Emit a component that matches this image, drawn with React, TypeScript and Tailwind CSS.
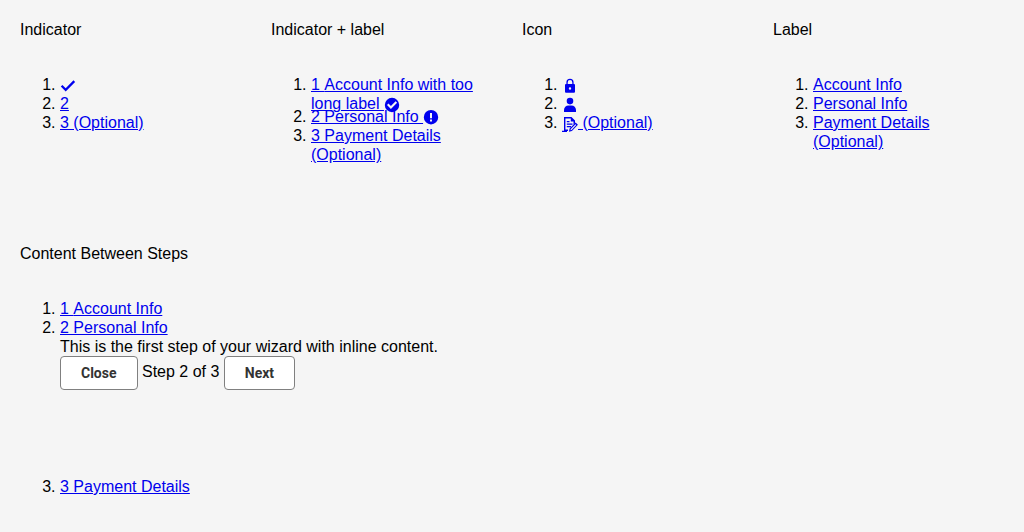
import type { ReactNode } from 'react';

const link = 'text-[#0000ee] underline';
const list = 'list-decimal pl-10 leading-[19px]';
const button =
  'h-[34px] rounded-[4px] border border-[#808080] bg-white px-5 align-middle font-[Roboto,sans-serif] text-sm font-bold text-[#333333]';

function Glyph({ d }: { d: string }) {
  return (
    <svg viewBox="0 0 16 16" aria-hidden="true" className="inline-block size-4 align-[-4px]">
      <path fill="currentColor" fillRule="evenodd" d={d} />
    </svg>
  );
}

const check = 'M5.7 13.4.8 8.5l1.600-1.600 3.300 3.300 7.800-7.900 1.600 1.600z';
const checkCircle = 'M8 .8a7.2 7.2 0 1 0 0 14.4A7.2 7.2 0 0 0 8 .8ZM6.9 12 3 8.1l1.5-1.5 2.4 2.4 4.7-4.7L13.1 5.8z';
const alertCircle = 'M8 0a7.2 7.2 0 1 0 0 14.4A7.2 7.2 0 0 0 8 0ZM7 3h2v5.2H7zM7 9.5h2v2H7z';
const lock =
  'M8 .8a3.6 3.6 0 0 0-3.6 3.6V6H4a1 1 0 0 0-1 1v6.7a1 1 0 0 0 1 1h8a1 1 0 0 0 1-1V7a1 1 0 0 0-1-1h-.4V4.4A3.6 3.6 0 0 0 8 .8ZM5.7 6V4.4a2.3 2.3 0 0 1 4.6 0V6zM8 9.3a1.2 1.2 0 1 0 0 2.4 1.2 1.2 0 0 0 0-2.4z';
const person =
  'M8 .8a3.3 3.3 0 1 0 0 6.6A3.3 3.3 0 0 0 8 .8ZM2 15v-2C2 10.5 4 8.5 6.5 8.5h3C12 8.5 14 10.5 14 13v2z';
const form =
  'M2 1h7.5L13 4.5V7l-1.5 1.5V5.5H8.8V2.4H3.4v11.2H6V15H5v1H0v-1.200h2zM4.800 5h2.700v1.300H4.800zM4.800 7.500h5.700v1.300H4.800zM4.800 10h4.200v1.300H4.800zM7 15.700l.6-3.200 6-6 2.300 2.300-6 6.200zM8.800 13.100l-.3 1.200 1.100-.3 4.600-4.900-.7-.8z';

function Group({ title, children }: { title: string; children: ReactNode }) {
  return (
    <section>
      <h2 className="mb-9 leading-[19px]">{title}</h2>
      {children}
    </section>
  );
}

function StepLink({ href, step, children }: { href: string; step: string; children: ReactNode }) {
  return (
    <a href={href} className={link}>
      <span className="inline-block whitespace-pre underline">{step + ' '}</span>
      {children}
    </a>
  );
}

export default function App() {
  return (
    <main className="min-h-screen bg-[#f5f5f5] p-5 font-['Liberation_Sans',Arial,sans-serif] text-base text-black">
      <div className="grid min-h-56 grid-cols-4 gap-5">
        <Group title="Indicator">
          <ol className={list}>
            <li><a href="#step-1" aria-label="Completed step" className={link}><Glyph d={check} /></a></li>
            <li><a href="#step-2" className={link}>2</a></li>
            <li><a href="#step-3" className={link}>3 (Optional)</a></li>
          </ol>
        </Group>
        <Group title="Indicator + label">
          <ol className={list}>
            <li className="h-8"><StepLink href="#account" step="1">Account Info with too long label <Glyph d={checkCircle} /></StepLink></li>
            <li><a href="#personal" className={link}>2 Personal Info <Glyph d={alertCircle} /></a></li>
            <li><a href="#payment" className={link}>3 Payment Details (Optional)</a></li>
          </ol>
        </Group>
        <Group title="Icon">
          <ol className={list}>
            <li><a href="#account" aria-label="Account info" className={link}><Glyph d={lock} /></a></li>
            <li><a href="#personal" aria-label="Personal info" className={link}><Glyph d={person} /></a></li>
            <li><a href="#payment" className={link}><Glyph d={form} /> (Optional)</a></li>
          </ol>
        </Group>
        <Group title="Label">
          <ol className={list}>
            <li><a href="#account" className={link}>Account Info</a></li>
            <li><a href="#personal" className={link}>Personal Info</a></li>
            <li><a href="#payment" className={link}>Payment Details (Optional)</a></li>
          </ol>
        </Group>
      </div>
      <Group title="Content Between Steps">
        <ol className={list}>
          <li><StepLink href="#account" step="1">Account Info</StepLink></li>
          <li className="mb-[87px]">
            <a href="#personal" className={link}>2 Personal Info</a>
            <p>This is the first step of your wizard with inline content.</p>
            <div>
              <button type="button" className={button}>Close</button>
              <span> Step 2 of 3 </span>
              <button type="button" className={button}>Next</button>
            </div>
          </li>
          <li><a href="#payment" className={link}>3 Payment Details</a></li>
        </ol>
      </Group>
    </main>
  );
}
